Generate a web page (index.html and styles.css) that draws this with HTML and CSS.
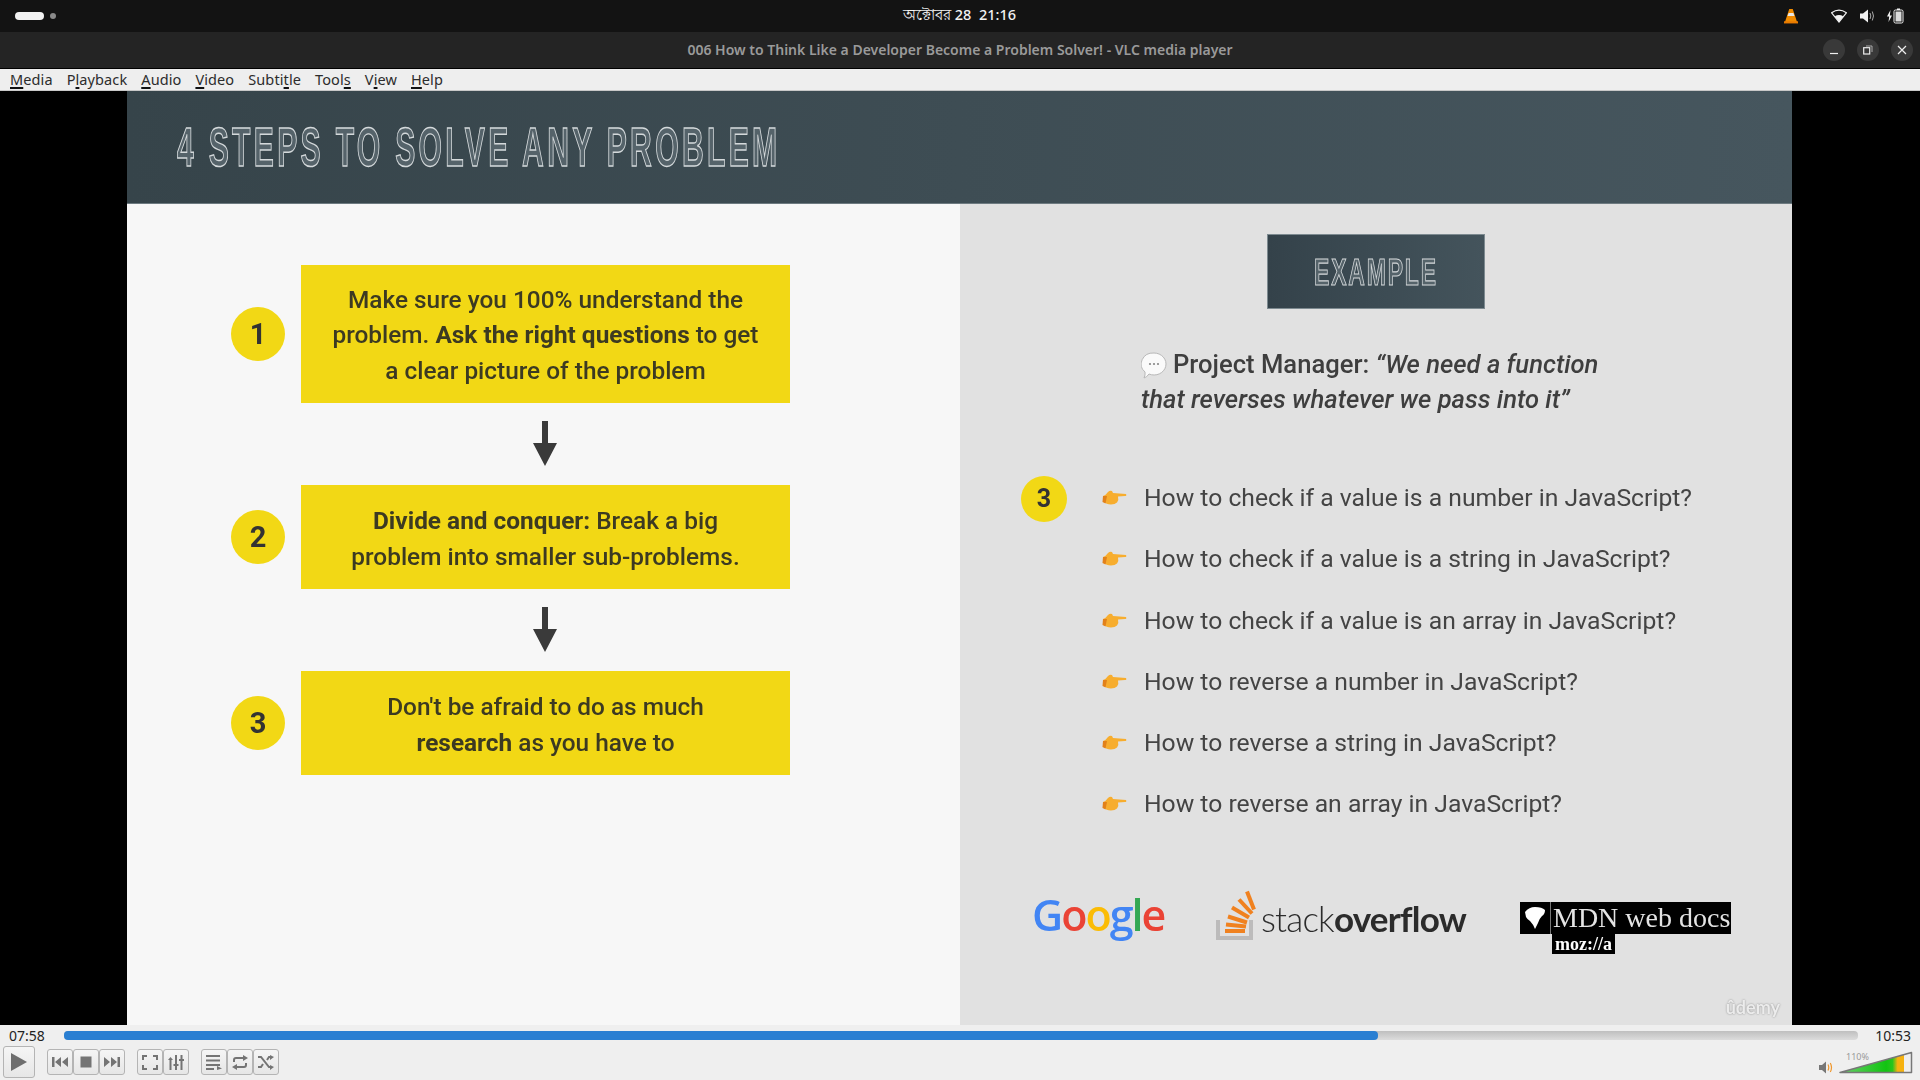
FILE: index.html
```html
<!DOCTYPE html>
<html lang="en">
<head>
<meta charset="utf-8">
<title>VLC media player</title>
<link rel="stylesheet" href="styles.css">
</head>
<body>
<header class="topbar">
  <div class="workspaces"><span class="ws-active"></span><span class="ws-dot"></span></div>
  <div class="clock">অক্টোবর 28&nbsp; 21:16</div>
  <div class="tray">
    <svg class="tray-vlc" width="14" height="16" viewBox="0 0 16 18"><path d="M6 1h4l5 15H1z" fill="#f08a00"/><path d="M5.200 5.500h5.600l1.100 3.600H4.100z" fill="#e8e8e8"/><path d="M0 15h16v2.500H0z" fill="#e87a00"/></svg>
    <svg class="tray-wifi" width="16" height="14" viewBox="0 0 16 14"><path d="M.6 3.800Q8-1.400 15.400 3.800L8 13z" fill="none" stroke="#f2f2f2" stroke-width="1.200"/><path d="M3.800 7.300Q8 4.800 12.200 7.300L8 13z" fill="#f2f2f2"/></svg>
    <svg class="tray-vol" width="15" height="14" viewBox="0 0 15 14"><path d="M0 4.500h3L8 .5v13L3 9.500H0z" fill="#f2f2f2"/><path d="M10 4q1.600 3 0 6M12.300 2.500q2.400 4.500 0 9" fill="none" stroke="#aaa" stroke-width="1"/></svg>
    <svg class="tray-bat" width="17" height="16" viewBox="0 0 17 16"><path d="M3.500 2 0 8.500h2.200L1.500 14 5 7.500H2.800z" fill="#f2f2f2"/><rect x="7" y="2" width="9" height="13" rx="1.500" fill="none" stroke="#f2f2f2"/><rect x="10" y=".5" width="3" height="1.500" fill="#f2f2f2"/><rect x="8.500" y="3.500" width="6" height="10" fill="#dcdcdc"/></svg>
  </div>
</header>

<div class="titlebar">
  <div class="window-title">006 How to Think Like a Developer Become a Problem Solver! - VLC media player</div>
  <div class="window-buttons">
    <span class="win-btn"><svg width="10" height="10" viewBox="0 0 10 10"><path d="M1 8.500h8" stroke="#eee" stroke-width="1.200"/></svg></span>
    <span class="win-btn"><svg width="10" height="10" viewBox="0 0 10 10"><rect x=".7" y="2.700" width="6" height="6.300" fill="none" stroke="#eee" stroke-width="1.200"/><path d="M3 1h6v6" fill="none" stroke="#aaa"/></svg></span>
    <span class="win-btn"><svg width="10" height="10" viewBox="0 0 10 10"><path d="M1 1l8 8M9 1l-8 8" stroke="#eee" stroke-width="1.200"/></svg></span>
  </div>
</div>

<nav class="menubar">
  <span><u>M</u>edia</span><span>P<u>l</u>ayback</span><span><u>A</u>udio</span><span><u>V</u>ideo</span><span>Subti<u>t</u>le</span><span>Tool<u>s</u></span><span>V<u>i</u>ew</span><span><u>H</u>elp</span>
</nav>

<main class="video">
  <section class="slide">
    <div class="slide-head"><h1 class="slide-title">4 STEPS TO SOLVE ANY PROBLEM</h1></div>
    <div class="slide-body">
      <div class="steps">
        <div class="step">
          <span class="badge">1</span>
          <p class="step-box step-tall">Make sure you 100% understand the problem. <b>Ask the right questions</b> to get a clear picture of the problem</p>
        </div>
        <svg class="arrow" width="24" height="45" viewBox="0 0 24 45"><path d="M9 0h6v22h9L12 45 0 22h9z" fill="#3a3a3a"/></svg>
        <div class="step">
          <span class="badge">2</span>
          <p class="step-box step-short"><b>Divide and conquer:</b> Break a big<br>problem into smaller sub-problems.</p>
        </div>
        <svg class="arrow" width="24" height="45" viewBox="0 0 24 45"><path d="M9 0h6v22h9L12 45 0 22h9z" fill="#3a3a3a"/></svg>
        <div class="step">
          <span class="badge">3</span>
          <p class="step-box step-short">Don't be afraid to do as much<br><b>research</b> as you have to</p>
        </div>
      </div>

      <div class="example">
        <h2 class="example-tag"><span class="example-word">EXAMPLE</span></h2>
        <p class="quote"><svg class="bubble" width="26" height="28" viewBox="0 0 26 28"><path d="M13 1a12 11 0 1 1-5 21q-2 3-5 4 1.500-3 1-6A12 11 0 0 1 13 1z" fill="#fafafa" stroke="#b8b8b8"/><circle cx="9" cy="12" r="1.100" fill="#888"/><circle cx="13" cy="12" r="1.100" fill="#888"/><circle cx="17" cy="12" r="1.100" fill="#888"/></svg>Project Manager: <i>“We need a function<br>that reverses whatever we pass into it”</i></p>
        <div class="questions">
          <span class="badge badge-small">3</span>
          <ul class="question-list">
            <li><svg class="hand" width="25" height="17" viewBox="0 0 25 17"><path d="M1 7q3-1 5-4 2-2 4-1l1 2 13 1q1 2-1 2l-7 .5q1 3-1 6-2 2-6 2-5 0-7-3z" fill="#f7ad2e"/><path d="M1 7l-.500 6 3 1.500L5 7z" fill="#e2811a"/></svg>How to check if a value is a number in JavaScript?</li>
            <li><svg class="hand" width="25" height="17" viewBox="0 0 25 17"><path d="M1 7q3-1 5-4 2-2 4-1l1 2 13 1q1 2-1 2l-7 .5q1 3-1 6-2 2-6 2-5 0-7-3z" fill="#f7ad2e"/><path d="M1 7l-.500 6 3 1.500L5 7z" fill="#e2811a"/></svg>How to check if a value is a string in JavaScript?</li>
            <li><svg class="hand" width="25" height="17" viewBox="0 0 25 17"><path d="M1 7q3-1 5-4 2-2 4-1l1 2 13 1q1 2-1 2l-7 .5q1 3-1 6-2 2-6 2-5 0-7-3z" fill="#f7ad2e"/><path d="M1 7l-.500 6 3 1.500L5 7z" fill="#e2811a"/></svg>How to check if a value is an array in JavaScript?</li>
            <li><svg class="hand" width="25" height="17" viewBox="0 0 25 17"><path d="M1 7q3-1 5-4 2-2 4-1l1 2 13 1q1 2-1 2l-7 .5q1 3-1 6-2 2-6 2-5 0-7-3z" fill="#f7ad2e"/><path d="M1 7l-.500 6 3 1.500L5 7z" fill="#e2811a"/></svg>How to reverse a number in JavaScript?</li>
            <li><svg class="hand" width="25" height="17" viewBox="0 0 25 17"><path d="M1 7q3-1 5-4 2-2 4-1l1 2 13 1q1 2-1 2l-7 .5q1 3-1 6-2 2-6 2-5 0-7-3z" fill="#f7ad2e"/><path d="M1 7l-.500 6 3 1.500L5 7z" fill="#e2811a"/></svg>How to reverse a string in JavaScript?</li>
            <li><svg class="hand" width="25" height="17" viewBox="0 0 25 17"><path d="M1 7q3-1 5-4 2-2 4-1l1 2 13 1q1 2-1 2l-7 .5q1 3-1 6-2 2-6 2-5 0-7-3z" fill="#f7ad2e"/><path d="M1 7l-.500 6 3 1.500L5 7z" fill="#e2811a"/></svg>How to reverse an array in JavaScript?</li>
          </ul>
        </div>
        <div class="logos">
          <div class="logo-google"><span class="g-b">G</span><span class="g-r">o</span><span class="g-y">o</span><span class="g-b">g</span><span class="g-g">l</span><span class="g-r">e</span></div>
          <div class="logo-so">
            <svg width="44" height="50" viewBox="0 0 44 50"><path d="M2 30v18h33V30" fill="none" stroke="#bcbbbb" stroke-width="4"/><g stroke="#f0811f" stroke-width="4" fill="none"><path d="M9 41h20"/><path d="M10 34.500l20 2"/><path d="M12 26.500l19 6"/><path d="M16 17.500l17 10"/><path d="M23 9.500l13 14"/><path d="M31 1.500l7 18"/></g></svg>
            <span class="so-text">stack<b>overflow</b></span>
          </div>
          <div class="logo-mdn">
            <div class="mdn-top"><span class="mdn-mark"><svg width="22" height="24" viewBox="0 0 22 24"><path d="M1 6q4-5 10-5 7 0 10 3 0 4-3 6-3 3-4 7l-3 6q-2-5-5-8-3-2-4-4z" fill="#fff"/></svg></span><span class="mdn-name">MDN web docs</span></div>
            <span class="mdn-moz">moz://a</span>
          </div>
        </div>
        <span class="watermark">ûdemy</span>
      </div>
    </div>
  </section>
</main>

<footer class="controls">
  <div class="seek-row">
    <span class="time">07:58</span>
    <div class="seek"><div class="seek-fill"></div></div>
    <span class="time">10:53</span>
  </div>
  <div class="button-row">
    <span class="btn btn-play"><svg width="18" height="20" viewBox="0 0 18 20"><path d="M1 1l16 9-16 9z" fill="#6e6e6e"/></svg></span>
    <div class="btn-group">
      <span class="btn"><svg width="16" height="12" viewBox="0 0 16 12"><path d="M0 1h2.500v10H0zM9 1v10L3 6zM16 1v10L10 6z" fill="#747474"/></svg></span>
      <span class="btn"><svg width="12" height="12" viewBox="0 0 12 12"><rect width="11" height="11" x=".5" y=".5" fill="#747474"/></svg></span>
      <span class="btn"><svg width="16" height="12" viewBox="0 0 16 12"><path d="M0 1v10l6-5zM7 1v10l6-5zM13.500 1H16v10h-2.500z" fill="#747474"/></svg></span>
    </div>
    <div class="btn-group">
      <span class="btn"><svg width="16" height="15" viewBox="0 0 16 15"><path d="M1 5V1h4M11 1h4v4M15 10v4h-4M5 14H1v-4" fill="none" stroke="#747474" stroke-width="2"/></svg></span>
      <span class="btn"><svg width="16" height="15" viewBox="0 0 16 15"><path d="M2.500 5v10M8 0v15M13.500 0v15" stroke="#747474" stroke-width="2"/><path d="M0 5l2.500-3L5 5zM5.500 11h5v-2h-5zM11 6h5V4h-5z" fill="#747474"/></svg></span>
    </div>
    <div class="btn-group">
      <span class="btn"><svg width="16" height="15" viewBox="0 0 16 15"><path d="M0 1h14M0 5.500h14M0 10h14M0 14h8" stroke="#747474" stroke-width="2"/><path d="M11 11l5 2.500-5 1.500z" fill="#747474"/></svg></span>
      <span class="btn"><svg width="16" height="15" viewBox="0 0 16 15"><path d="M2 7V5q0-2 2-2h8M14 8v2q0 2-2 2H4" fill="none" stroke="#747474" stroke-width="2"/><path d="M11 0l5 3-5 3zM5 9l-5 3 5 3z" fill="#747474"/></svg></span>
      <span class="btn"><svg width="16" height="15" viewBox="0 0 16 15"><path d="M0 2h3l8 10h2M0 12h3l2-3M9 5l2-3h2" fill="none" stroke="#747474" stroke-width="2"/><path d="M12 0l4 2-4 3zM12 10l4 2-4 3z" fill="#747474"/></svg></span>
    </div>
    <div class="volume">
      <svg class="vol-icon" width="14" height="13" viewBox="0 0 14 13"><path d="M0 4h3l4-3.500v12L3 9H0z" fill="#777"/><path d="M9 3.500q1.500 3 0 6M11.300 2q2.400 4.500 0 9" fill="none" stroke="#f0962a" stroke-width="1.200"/></svg>
      <div class="vol-meter">
        <span class="vol-label">110%</span>
        <svg width="74" height="23" viewBox="0 0 74 23"><defs><linearGradient id="volgrad" x1="0" x2="1" y1="0" y2="0"><stop offset="0" stop-color="#6ccf6c"/><stop offset=".72" stop-color="#12c412"/><stop offset=".82" stop-color="#27c51d"/><stop offset=".9" stop-color="#f6b210"/><stop offset="1" stop-color="#f6b210"/></linearGradient></defs><path d="M1 21.500 65 3.600V21.500z" fill="url(#volgrad)"/><path d="M1 21.500 72.500 1.500v20z" fill="none" stroke="#777" stroke-width="1.500" stroke-linejoin="round"/></svg>
      </div>
    </div>
  </div>
</footer>
</body>
</html>
```

FILE: styles.css
```css
* { box-sizing: border-box; }
html, body { margin: 0; height: 100%; }
body {
  width: 1920px;
  height: 1080px;
  overflow: hidden;
  display: flex;
  flex-direction: column;
  background: #000;
  font-family: "Noto Sans", "Open Sans", sans-serif;
}

/* system bar */
.topbar {
  height: 32px;
  background: #131313;
  display: grid;
  grid-template-columns: 1fr auto 1fr;
  align-items: center;
  padding: 0 16px 0 15px;
}
.workspaces { display: flex; align-items: center; gap: 6px; }
.ws-active { width: 29px; height: 8px; border-radius: 4px; background: #f2f2f2; }
.ws-dot { width: 6px; height: 6px; border-radius: 50%; background: #8a8a8a; }
.clock { color: #f2f2f2; font-size: 14.500px; font-weight: 500; }
.tray { display: flex; align-items: center; justify-content: flex-end; }
.tray-vlc { margin-right: 33px; }
.tray-wifi { margin-right: 13px; }
.tray-vol { margin-right: 12px; }

/* window title */
.titlebar {
  height: 37px;
  background: #242424;
  border-bottom: 1px solid #000;
  display: flex;
  align-items: center;
  justify-content: center;
  position: relative;
}
.window-title { color: #9a9a9a; font-size: 14px; font-weight: 600; }
.window-buttons {
  position: absolute;
  right: 7px;
  top: 7px;
  display: flex;
  gap: 12px;
}
.win-btn {
  width: 22px;
  height: 22px;
  border-radius: 50%;
  background: #393939;
  display: flex;
  align-items: center;
  justify-content: center;
}

/* menu */
.menubar {
  height: 22px;
  background: #eeeeee;
  border-bottom: 1px solid #c8c8c8;
  display: flex;
  align-items: center;
  gap: 14px;
  padding-left: 10px;
  font-size: 14.500px;
  letter-spacing: .1px;
  color: #2c2c2c;
}
.menubar u { text-underline-offset: 2px; text-decoration-thickness: 2px; text-decoration-color: #111; }

/* video */
.video {
  height: 936px;
  background: #000;
  display: flex;
  padding-left: 127px;
}
.slide {
  width: 1665px;
  display: flex;
  flex-direction: column;
  font-family: Roboto, "Noto Sans", sans-serif;
  color: #3e3e3e;
  filter: blur(.35px);
}
.slide-head {
  height: 113px;
  background: linear-gradient(90deg, #36444a, #46565e);
  border-bottom: 1px solid #6d7a80;
  padding-left: 50px;
  display: flex;
  align-items: center;
}
.slide-title {
  margin: 0;
  font-family: "Liberation Sans", sans-serif;
  font-size: 55px;
  font-weight: 700;
  letter-spacing: 6px;
  white-space: nowrap;
  color: #55636a;
  -webkit-text-stroke: 1.400px #d4d9db;
  transform: scaleX(.548);
  transform-origin: left center;
}
.slide-body {
  flex: 1;
  display: grid;
  grid-template-columns: 833px 832px;
}

.steps {
  background: #f7f7f7;
  padding: 61px 0 0 104px;
  display: flex;
  flex-direction: column;
}
.step { display: flex; align-items: center; gap: 16px; }
.badge {
  flex: none;
  width: 54px;
  height: 54px;
  border-radius: 50%;
  background: #f2d815;
  color: #333;
  font-weight: 700;
  font-size: 29px;
  display: flex;
  align-items: center;
  justify-content: center;
}
.step-box {
  margin: 0;
  width: 489px;
  background: #f2d815;
  color: #3c3a22;
  font-size: 24.400px;
  line-height: 35.500px;
  text-align: center;
  font-weight: 500;
}
.step-tall { padding: 17px 24px 14.500px; }
.step-short { padding: 18.500px 24px 14.500px; }
.step-box b { font-weight: 700; }
.arrow { margin: 18px 0 19px 302px; display: block; }

.example {
  background: #e1e1e1;
  padding-top: 30px;
  display: flex;
  flex-direction: column;
  position: relative;
}
.example-tag {
  margin: 0 auto;
  width: 218px;
  height: 75px;
  padding-top: 3px;
  background: linear-gradient(90deg, #34424a, #44545c);
  border: 1px solid #7d8a90;
  display: flex;
  align-items: center;
  justify-content: center;
  font-family: "Liberation Sans", sans-serif;
  font-size: 37px;
  font-weight: 700;
  letter-spacing: 3px;
  color: #55636a;
  -webkit-text-stroke: 1.100px #d5d9db;
}
.example-word { display: block; transform: scaleX(.62); }
.quote {
  margin: 38px 0 0 181px;
  font-size: 25.600px;
  line-height: 35px;
  color: #3e3e3e;
  font-weight: 500;
  white-space: nowrap;
}
.quote i { font-weight: 500; }
.bubble { vertical-align: -7px; margin-right: 6px; }

.questions {
  display: flex;
  margin: 57px 0 0 61px;
  gap: 35px;
}
.badge-small { width: 46px; height: 46px; font-size: 25px; margin-top: 2px; }
.question-list {
  list-style: none;
  margin: 0;
  padding: 0;
  display: flex;
  flex-direction: column;
  gap: 14px;
  font-size: 24.700px;
  color: #444;
}
.question-list li {
  height: 47.300px;
  display: flex;
  align-items: center;
  gap: 17px;
}
.hand { flex: none; }

.logos {
  display: flex;
  align-items: center;
  margin: 48px 0 0 72px;
}
.logo-google {
  font-family: "Open Sans", sans-serif;
  font-size: 43px;
  font-weight: 600;
  letter-spacing: -2px;
  width: 184px;
}
.g-b { color: #4285f4; }
.g-r { color: #ea4335; }
.g-y { color: #fbbc05; }
.g-g { color: #34a853; }
.logo-so { display: flex; align-items: flex-end; width: 304px; color: #2b2b2b; }
.so-text {
  font-family: Lato, sans-serif;
  font-size: 35px;
  font-weight: 300;
  letter-spacing: -.8px;
  margin-left: 1px;
  line-height: 44px;
}
.so-text b { font-weight: 700; }
.logo-mdn { display: flex; flex-direction: column; align-items: flex-start; margin-top: 26px; }
.mdn-top { display: flex; background: #000; }
.mdn-mark {
  width: 31px;
  height: 32px;
  display: flex;
  align-items: center;
  justify-content: center;
  border-right: 1px solid #777;
}
.mdn-name {
  font-family: "Liberation Serif", serif;
  color: #e4e4e4;
  font-size: 28px;
  line-height: 32px;
  padding: 0 1px 0 2px;
}
.mdn-moz {
  background: #000;
  color: #fff;
  font-family: "Liberation Serif", serif;
  font-weight: 700;
  font-size: 18px;
  line-height: 20px;
  padding: 0 3px;
  margin-left: 32px;
}
.watermark {
  position: absolute;
  right: 12px;
  bottom: 7px;
  font-family: Lato, sans-serif;
  font-size: 18px;
  font-weight: 700;
  color: #ececec;
  text-shadow: 0 0 2px #888;
}

/* controls */
.controls {
  flex: 1;
  background: #efefef;
  display: flex;
  flex-direction: column;
}
.seek-row {
  height: 21px;
  display: flex;
  align-items: center;
  padding: 0 9px;
  gap: 17px;
}
.time { font-family: "Noto Sans", sans-serif; font-size: 14px; color: #222; }
.seek {
  flex: 1;
  height: 9px;
  margin-left: 2px;
  border-radius: 4px;
  background: linear-gradient(#bfbfbf, #dcdcdc);
}
.seek-fill { width: 1314px; height: 100%; border-radius: 4px; background: #2a7fd2; }
.button-row {
  flex: 1;
  display: flex;
  align-items: center;
  padding: 0 0 2px 3px;
  gap: 12px;
}
.btn-group { display: flex; }
.btn {
  width: 26px;
  height: 26px;
  border: 1px solid #b4b4b4;
  border-radius: 3px;
  background: linear-gradient(#f5f5f5, #e6e6e6);
  display: flex;
  align-items: center;
  justify-content: center;
}
.btn-play { width: 32px; height: 32px; }
.volume { margin-left: auto; display: flex; align-items: flex-end; gap: 6px; margin-right: 7px; }
.vol-meter { position: relative; line-height: 0; }
.vol-label { position: absolute; left: 7px; top: 1px; font-size: 9px; line-height: 10px; color: #9a9a9a; }
```
